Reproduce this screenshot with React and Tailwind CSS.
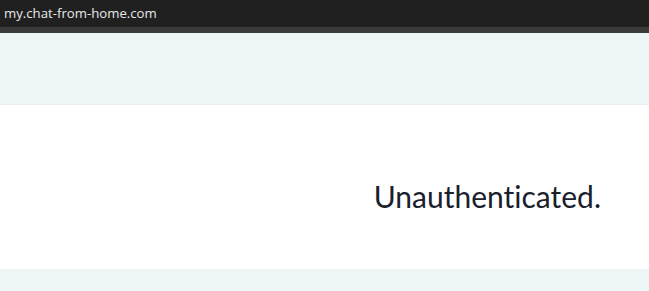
export default function App() {
  return (
    <div className="w-[649px] h-[291px] overflow-hidden flex flex-col bg-white">
      <div className="h-[27px] bg-[#202020] flex items-center px-[4px] shrink-0">
        <span className="text-[#e8e8e8] text-[13.2px] leading-none" style={{ fontFamily: '"Open Sans", "Noto Sans", sans-serif' }}>
          my.chat-from-home.com
        </span>
      </div>
      <div className="h-[6px] bg-[#3b3b3b] shrink-0" />
      <div className="h-[72px] bg-[#eff7f6] shrink-0 border-b border-[#e8f0ef]" />
      <div className="h-[164px] bg-white flex items-center justify-end pr-[48px] pt-[18px] shrink-0">
        <span className="text-[#1a202c] text-[30px] leading-none [font-variant-ligatures:none]" style={{ fontFamily: 'Lato, sans-serif' }}>
          Unauthenticated.
        </span>
      </div>
      <div className="flex-1 bg-[#eff7f6]" />
    </div>
  );
}
